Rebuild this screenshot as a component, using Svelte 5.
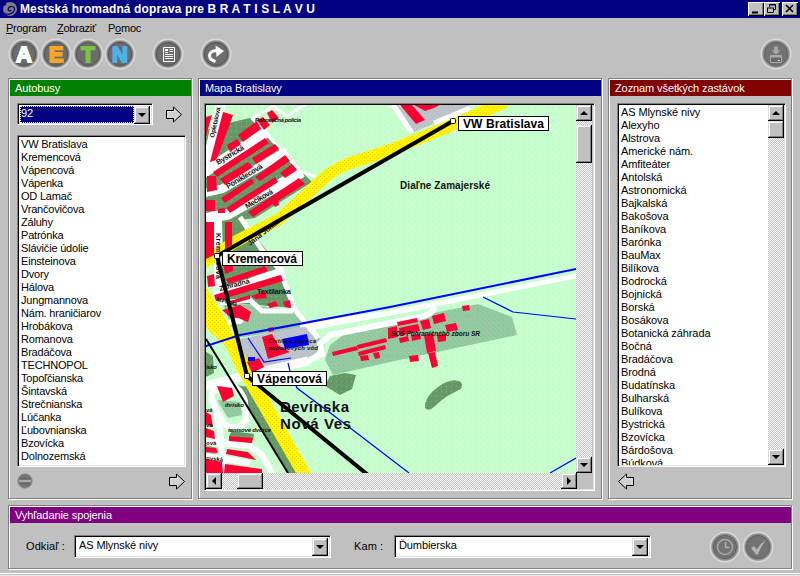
<script>
  const stops = ['VW Bratislava', 'Kremencová', 'Vápencová', 'Vápenka', 'OD Lamač', 'Vrančovičova', 'Záluhy', 'Patrónka', 'Slávičie údolie', 'Einsteinova', 'Dvory', 'Hálova', 'Jungmannova', 'Nám. hraničiarov', 'Hrobákova', 'Romanova', 'Bradáčova', 'TECHNOPOL', 'Topoľčianska', 'Šintavská', 'Strečnianska', 'Lúčanka', 'Ľubovnianska', 'Bzovícka', 'Dolnozemská'];
  const all = ['AS Mlynské nivy', 'Alexyho', 'Alstrova', 'Americké nám.', 'Amfiteáter', 'Antolská', 'Astronomická', 'Bajkalská', 'Bakošova', 'Baníkova', 'Barónka', 'BauMax', 'Bilíkova', 'Bodrocká', 'Bojnická', 'Borská', 'Bosákova', 'Botanická záhrada', 'Bočná', 'Bradáčova', 'Brodná', 'Budatínska', 'Bulharská', 'Bulíkova', 'Bystrická', 'Bzovícka', 'Bárdošova', 'Búdková'];
  const letters = [['A', '#ffffff'], ['E', '#f5a623'], ['T', '#7cc142'], ['N', '#4bb4e6']];
  const reds = [
    '223,112 233,115 220,151 216,160 210,162', '206,117 212,115 206,136',
    '238,135 257,121 261,129 243,142', '257,120 263,117 270,125 264,130', '267,113 272,110 279,118 272,123', '227,145 237,139 241,144 230,152',
    '213,172 265,138 269,143 217,177', '220,179 248,162 253,167 225,185', '252,158 275,144 279,149 256,164',
    '221,198 252,178 254,183 225,203', '255,177 285,155 290,161 260,181', '226,208 275,177 278,182 230,213', '280,173 292,164 297,170 285,178',
    '248,212 299,178 305,184 278,201 279,205 275,207 273,204 253,217',
    '207,176 216,176 217,190 207,192', '206,200 215,200 215,211 206,211', '218,209 225,208 225,213 218,213',
    '225,222 232,222 232,245 225,249', '206,222 214,222 214,255 206,259', '223,261 233,260 233,271 225,274', '207,276 214,274 215,286 208,287',
    '226,279 265,266 268,271 229,284', '214,295 281,275 283,281 216,301', '230,301 250,295 250,299 231,304', '251,296 265,291 267,298 256,299', '267,304 276,301 278,306 270,308', '283,302 290,300 291,308 285,307',
    '222,310 240,305 251,312 248,322 238,318 230,317', '268,328 273,327 274,331 269,332',
    '247,362 259,358 264,367 252,373', '262,337 272,334 278,345 290,352 268,359',
    '397,322 417,318 418,322 398,326', '332,352 357,346 358,350 333,356', '357,345 386,338 387,342 358,349', '358,352 385,345 386,349 359,356',
    '388,328 397,326 398,337 388,339', '399,328 418,324 420,331 400,336', '399,338 408,336 409,341 400,343', '411,335 420,334 421,339 412,341', '420,321 429,319 431,328 423,330', '432,316 444,313 446,321 434,324', '445,325 456,323 458,330 447,332', '437,335 446,334 446,341 438,342', '424,335 433,333 436,351 427,353', '428,353 435,352 438,366 432,368', '409,356 418,355 419,361 410,362', '462,306 469,305 470,310 463,311', '360,356 368,355 369,360 361,361', '373,353 379,352 380,358 375,359',
    '400,105 412,105 425,120 416,124', '414,105 440,105 434,108 425,111',
    '217,386 232,388 234,396 223,402', '206,412 211,415 213,427 206,424', '206,428 214,431 215,439 206,437', '206,447 216,448 218,453 206,452',
    '229,436 253,438 252,443 229,441', '227,449 248,452 256,460 226,454', '206,459 222,462 223,473 206,473', '225,464 262,469 262,473 224,473'
  ];
</script>

{#snippet arrow(flip)}
  <svg class="arrow" width="17" height="17" viewBox="0 0 17 17" class:flip>
    <path d="M1 4.5H7.5V1L15.5 8.5L7.500 16V12.500H1Z" fill="#d0d0d0" />
    <path d="M2 11.500V5.500H8.500V3" fill="none" stroke="#fff" stroke-dasharray="1 1" />
    <path d="M7.500 4.500V1L15.500 8.500L7.500 16V12.500H.5V4.500H7.500" fill="none" stroke="#000" />
  </svg>
{/snippet}

{#snippet orb(kind, color, dim)}
  <svg width="32" height="32" viewBox="0 0 32 32">
    <circle cx="16" cy="16" r="16" fill="url(#rim)" />
    <circle cx="16" cy="16" r="12.500" fill={dim ? '#737373' : '#6c6c6c'} stroke={dim ? '#8c8c8c' : '#848484'} stroke-width="1.500" />
    <circle cx="16" cy="16" r="11.500" fill="none" stroke={dim ? '#606060' : '#505050'} />
    {#if kind.length === 1}
      <text x="16" y="24" text-anchor="middle" class="letter" fill={color} stroke={color}>{kind}</text>
    {:else if kind === 'doc'}
      <path d="M11.500 9.500H22.500V23.500H11.500Z" fill="none" stroke="#fff" />
      <path d="M13 11.500H16M13 12.500H16M13 14.500H16M17.500 11.500H21M17.500 13.500H21M13 16.500H21M13 18.500H21M13 20.500H21" stroke="#fff" />
    {:else if kind === 'redo'}
      <path d="M15.500 23.500C6.500 21 8 12.500 17.500 12.500" fill="none" stroke="#fff" stroke-width="3" /><path d="M15.500 7.500L24 13L16.500 19Z" fill="#fff" />
    {:else if kind === 'save'}
      <path d="M14 8.500H18V12.500H20.500L16 16.500L11.500 12.500H14Z" fill="#a8a8a8" /><path d="M10.500 17.500H21.500V24.500H10.500Z" fill="#686868" stroke="#a8a8a8" /><path d="M10.500 18.500H21.500" stroke="#a8a8a8" stroke-width="2" /><path d="M17.500 22.500H20" stroke="#ccc" />
    {:else if kind === 'clock'}
      <circle cx="16" cy="16" r="7.500" fill="none" stroke="#a8a8a8" stroke-width="1.500" /><path d="M16.500 11V16.500H20.500" fill="none" stroke="#b0b0b0" stroke-width="1.500" />
    {:else}
      <path d="M9 17L12 15L15 18.500Q17.500 13 24 9Q19 15 16 23.500H14Z" fill="#b4b4b4" />
    {/if}
  </svg>
{/snippet}

{#snippet btn(dir)}
  <span class="btn"><i class={dir}></i></span>
{/snippet}

<div class="app">
  <svg width="0" height="0" class="defs"><defs>
    <radialGradient id="rim"><stop offset=".8" stop-color="#8c8c8c" /><stop offset=".86" stop-color="#b8b8b8" /><stop offset=".92" stop-color="#dedede" /><stop offset="1" stop-color="#c0c0c0" /></radialGradient>
  </defs></svg>
  <header>
    <svg class="logo" width="16" height="16" viewBox="0 0 16 16"><circle cx="8" cy="8" r="7" fill="#808080" /><path d="M2 12Q7 15 11.500 11Q14 7 10.500 5.500Q6.500 5 6 8.500Q7 11 9.500 9" fill="none" stroke="#000080" stroke-width="1.200" /><path d="M1 4L4 3M12 14L15 13" stroke="#000080" stroke-width="2" /></svg>
    <b>Mestská hromadná doprava pre B R A T I S L A V U</b>
    <div class="winbtns">
      <span><svg width="16" height="14"><path d="M4 10.500H10" stroke="#000" stroke-width="2" /></svg></span>
      <span><svg width="16" height="14"><path d="M5.500 5V2.500H11.500V7.500H9.500M5 3H12M3 6H10M3.500 6V10.500H9.500V6" fill="none" stroke="#000" /></svg></span>
      <span class="close"><svg width="16" height="14"><path d="M4 3L11 10M11 3L4 10" stroke="#000" stroke-width="1.700" /></svg></span>
    </div>
  </header>
  <nav><span><u>P</u>rogram</span><span><u>Z</u>obraziť</span><span>P<u>o</u>moc</span></nav>
  <div class="toolbar">
    {#each letters as [l, c]}{@render orb(l, c, false)}{/each}
    <div class="t-doc">{@render orb('doc', '', false)}</div>
    <div class="t-redo">{@render orb('redo', '', false)}</div>
    <div class="t-save">{@render orb('save', '', true)}</div>
  </div>
  <main>
    <section class="panel left">
      <h2 class="green">Autobusy</h2>
      <div class="pick"><div class="combo small"><span class="sel">92</span>{@render btn('down')}</div>{@render arrow(false)}</div>
      <ul class="sunk list">{#each stops as s}<li>{s}</li>{/each}</ul>
      <div class="foot">
        <svg width="16" height="16" viewBox="0 0 16 16"><circle cx="8" cy="8" r="7.300" fill="#747474" stroke="#999" /><path d="M2.500 6H13.500M2.500 10H13.500" stroke="#555" /><path d="M2 8H14" stroke="#a8a8a8" stroke-width="2.500" /></svg>
        {@render arrow(false)}
      </div>
    </section>
    <section class="panel mid">
      <h2 class="navy">Mapa Bratislavy</h2>
      <div class="sunk mapbox">
        <div class="maprow">
          <svg class="map" width="370" height="368" viewBox="206 105 370 368">
            <defs>
              <pattern id="land" width="6" height="6" patternUnits="userSpaceOnUse"><rect width="6" height="6" fill="#c8fecc" /><path d="M0 0h1v1h-1zM3 2h1v1h-1zM1 4h1v1h-1z" fill="#aaffcc" /><path d="M4 0h1v1h-1zM5 4h1v1h-1z" fill="#ccffea" /></pattern>
              <pattern id="wood" width="5" height="5" patternUnits="userSpaceOnUse"><rect width="5" height="5" fill="#669966" /><path d="M1 1h1v1h-1z" fill="#85b385" /><path d="M3 3h1v1h-1z" fill="#4f9966" /></pattern>
              <pattern id="park" width="5" height="5" patternUnits="userSpaceOnUse"><rect width="5" height="5" fill="#94cba0" /><path d="M0 1h1v1h-1zM2 3h1v1h-1z" fill="#7cc29a" /><path d="M3 0h1v1h-1z" fill="#98ae98" /></pattern>
              <pattern id="plant" width="4" height="4" patternUnits="userSpaceOnUse"><rect width="4" height="4" fill="#c0c4cc" /><path d="M0 1h1v1h-1zM2 3h1v1h-1z" fill="#a8b8c0" /></pattern>
              <pattern id="road" width="4" height="4" patternUnits="userSpaceOnUse"><rect width="4" height="4" fill="#fff800" /><path d="M0 0h1v1h-1zM2 2h1v1h-1z" fill="#ffcc00" /></pattern>
            </defs>
            <rect x="206" y="105" width="370" height="368" fill="url(#land)" />
            <g fill="url(#wood)">
              <path d="M206 130L228 123L250 118L302 172L312 182L255 218L206 225Z M222 216L243 220L280 268L293 308L220 302L223 255Z" />
              <path d="M235 385L250 387L297 473L288 473Z M206 352L213 356L214 373L206 377Z M232 431L254 434L253 439L229 436Z" />
              <path d="M325 386L330 376L345 373L356 375L352 389L340 395Z M425 408Q424 397 438 387Q452 377 461 382Q465 388 455 392Q444 397 434 407Q428 412 425 408Z" />
            </g>
            <path d="M222 302L295 310L308 327L236 338Z M478 304L512 317L517 335L390 362L333 375L325 360L330 345L350 330Z M217 400L240 402L242 415L228 418Z M206 445L218 448L216 455L206 454Z" fill="url(#park)" />
            <path d="M236 340L308 325L325 345L310 358L255 368L242 375Z M397 105L414 132L450 117L470 105Z" fill="url(#plant)" />
            <g fill="none" stroke="#fff">
              <path d="M221 103L207 164" stroke-width="10" />
              <path d="M203 173L268 131M204 219L228 214L302 172" stroke-width="11" />
              <path d="M204 193L222 189L287 151" stroke-width="8.500" />
              <path d="M252 118L300 171L316 177M252 118L273 106L287 116L306 104" stroke-width="3" />
              <path d="M218 215V288" stroke-width="8" />
              <path d="M214 294L284 270" stroke-width="7" />
              <path d="M240 217L262 250L280 270L295 310L318 338" stroke-width="5" />
              <path d="M220 303L250 300L262 311L293 311M222 323L243 320M239 311V324M300 325L325 322L390 313L576 276" stroke-width="5" />
              <path d="M308 329L333 324L430 306" stroke-width="4" />
              <path d="M206 386L243 376L308 361L322 354L320 344L330 335L420 317Q432 315 435 307" stroke-width="6" />
              <path d="M206 386L243 376L308 361" stroke-width="9" />
              <path d="M232 387L213 391Q209 397 215 408L224 423Q229 430 240 426L246 420L245 401Q240 387 232 387M213 400L220 430L224 473M206 442L250 446L262 455L272 473M206 456L250 463M211 435L225 442" stroke-width="6" />
              <path d="M393 105L412 133M434 123L470 108" stroke-width="5" />
              <path d="M398 98L402 106" stroke-width="4" />
            </g>
            <g fill="none" stroke="url(#road)" stroke-width="12">
              <path d="M204 263L233 243L279 219Q300 201 323 179Q334 169 350 163L390 150L455 124L505 102" />
              <path d="M206 287L214 300L225 318L233 334L257 377L311 473H296L236 369L226 347L206 328Z" fill="url(#road)" stroke="none" />
            </g>
            <g fill="#ff0033">{#each reds as p}<polygon points={p} />{/each}</g>
            <g fill="none" stroke="#0000ff">
              <path d="M206 346L240 335L390 307L576 269" stroke-width="2" />
              <path d="M248 338L264 362L291 358M288 363L290 371L297 388L345 424L409 473M483 297L513 312L576 319M550 473L576 458" stroke-width="1.200" />
              <path d="M282 339L307 334L309 345L285 349ZM248 357H255V361H248Z" fill="#0000ff" stroke="none" />
            </g>
            <path d="M206 339L214 352L288 473" fill="none" stroke="#000" stroke-width="2" />
            <g class="labels">
              <text x="400" y="189" font-size="10" textLength="90">Diaľne Zamajerské</text>
              <text x="280" y="412" font-size="15" textLength="69">Devínska</text>
              <text x="280" y="429" font-size="15" textLength="71">Nová Ves</text>
              <text transform="translate(214 138) rotate(-78)" font-size="6.500" textLength="31">Opletalova</text>
              <text transform="translate(218 165) rotate(-31)" font-size="7.500" textLength="31">Bystrická</text>
              <text transform="translate(228 189) rotate(-31)" font-size="7.500" textLength="41">Poniklecová</text>
              <text transform="translate(247 209) rotate(-31)" font-size="7.500" textLength="31">Mečíková</text>
              <text transform="translate(216 233) rotate(90)" font-size="7" textLength="46">Kremencová</text>
              <text transform="translate(250 246) rotate(-38)" font-size="7" textLength="42">Jána Jonáša</text>
              <text transform="translate(220 291) rotate(-15)" font-size="7" textLength="31">Záhradná</text>
              <text transform="translate(216 301) rotate(14)" font-size="6" textLength="21">M.Pišúta</text>
              <text x="257" y="294" font-size="7.500" textLength="34">Textilanka</text>
              <text x="206" y="412" font-size="6">vá</text><text x="206" y="427" font-size="6">va</text><text x="206" y="445" font-size="6">ová</text><text x="206" y="460" font-size="6" transform="rotate(6 206 460)">ovská</text>
              <g font-style="italic" font-size="6">
                <text x="255" y="122" textLength="46">Pohraničná polícia</text>
                <text x="268" y="343" textLength="48">Čistiaca stanica</text><text x="268" y="350" textLength="50">odpadových vôd</text>
                <text x="391" y="336" font-size="6.500" textLength="89">SOŠ Pohraničného zboru SR</text>
                <text x="206" y="369" textLength="11">isko</text><text x="225" y="407" textLength="19">ihrisko</text><text x="228" y="432" textLength="43">tenisové dvorce</text>
              </g>
            </g>
            <path d="M453 121L217 256L247 376L368 475" fill="none" stroke="#000" stroke-width="4" />
            <g fill="#fff" stroke="#000"><rect x="450.500" y="118.500" width="5" height="5" rx="1" /><rect x="214.500" y="253.500" width="5" height="5" rx="1" /><rect x="244.500" y="373.500" width="5" height="5" rx="1" />
              <rect x="458.500" y="116.500" width="90" height="14" /><rect x="222.500" y="251.500" width="80" height="14" /><rect x="252.500" y="371.500" width="74" height="14" /></g>
            <g class="stoplabels"><text x="463" y="128" textLength="81">VW Bratislava</text><text x="227" y="263" textLength="70">Kremencová</text><text x="257" y="383" textLength="65">Vápencová</text></g>
          </svg>
          <div class="vsb">{@render btn('up')}<b class="thumb"></b><span class="fill"></span>{@render btn('down')}</div>
        </div>
        <div class="hsb">{@render btn('lt')}<b class="thumb"></b><span class="fill"></span>{@render btn('rt')}<em></em></div>
      </div>
    </section>
    <section class="panel right">
      <h2 class="maroon">Zoznam všetkých zastávok</h2>
      <div class="sunk listbox"><ul>{#each all as s}<li>{s}</li>{/each}</ul>
        <div class="vsb">{@render btn('up')}<b class="thumb"></b><span class="fill"></span>{@render btn('down')}</div></div>
      <div class="foot">{@render arrow(true)}</div>
    </section>
  </main>
  <section class="panel bottom">
    <h2 class="purple">Vyhľadanie spojenia</h2>
    <div class="search">
      <label for="from">Odkiaľ :</label><div id="from" class="combo wide"><span>AS Mlynské nivy</span>{@render btn('down')}</div>
      <label for="to" class="kam">Kam :</label><div id="to" class="combo wide"><span>Ďumbierska</span>{@render btn('down')}</div>
      <div class="go">{@render orb('clock', '', true)}{@render orb('check', '', true)}</div>
    </div>
  </section>
  <div class="status"></div>
</div>

<style>
  .app { width: 800px; height: 576px; background: #c0c0c0; overflow: hidden; font: 11px/13px "Liberation Sans", Arial, sans-serif; letter-spacing: -.1px; color: #000; display: flex; flex-direction: column; }
  .app :global(*) { box-sizing: border-box; }
  svg { display: block; flex: none; letter-spacing: 0; }
  .defs { height: 0; }
  header { height: 18px; flex: none; background: #000080; color: #fff; display: flex; align-items: center; padding: 0 2px; }
  header b { margin-left: 2px; font-size: 12px; letter-spacing: .12px; white-space: pre; }
  .winbtns { margin-left: auto; display: flex; }
  .winbtns span { width: 16px; height: 14px; background: #c0c0c0; box-shadow: inset 1px 1px #fff, inset -1px -1px #000, inset -2px -2px #808080; }
  .winbtns .close { margin-left: 2px; }
  nav { height: 20px; flex: none; display: flex; padding: 4px 6px 0; }
  nav span { width: 51px; white-space: nowrap; letter-spacing: -.25px; }
  .toolbar { height: 40px; flex: none; display: flex; padding-left: 8px; }
  .t-doc { margin-left: 16px; } .t-redo { margin-left: 16px; } .t-save { margin-left: auto; padding-right: 8px; }
  .letter { font: bold 22px "Liberation Sans", Arial, sans-serif; stroke-width: 1.8px; }
  main { display: flex; padding-left: 8px; height: 421px; flex: none; }
  .panel { border: 1px solid #808080; box-shadow: inset 1px 1px #fff, 1px 1px #fff; padding: 1px 0 0 1px; height: 421px; flex: none; }
  .left { width: 184px; } .mid { width: 404px; margin-left: 6px; } .right { width: 184px; margin-left: 6px; }
  h2 { margin: 0; height: 16px; font-size: 11px; line-height: 16px; font-weight: normal; color: #fff; padding-left: 5px; }
  .green { background: #008000; } .navy { background: #000080; } .maroon { background: #800000; } .purple { background: #800080; }
  .sunk, .combo { border: 1px solid; border-color: #808080 #fff #fff #808080; background: #fff; box-shadow: inset 1px 1px #000, inset -1px -1px #dfdfdf; padding: 2px; }
  .combo { display: flex; height: 23px; padding: 1px 2px 2px 2px; }
  .combo > span:first-child { flex: 1; line-height: 15px; padding-left: 1px; margin: 1px 1px 0; }
  .small { width: 136px; height: 22px; }
  .small .sel { background: #000080; color: #fff; outline: 1px dotted #ffff80; outline-offset: -1px; height: 17px; margin: 1px 0 0 !important; padding-left: 1px !important; }
  .pick { display: flex; padding: 7px 0 0 7px; gap: 13px; align-items: center; height: 29px; }
  .flip { transform: scaleX(-1); }
  ul { list-style: none; margin: 0; padding: 0; overflow: hidden; }
  li { height: 13px; white-space: nowrap; padding-left: 2px; }
  .list { width: 169px; height: 332px; margin: 10px 0 0 7px; letter-spacing: -.2px; }
  .list li { padding-left: 1px; }
  .left .list { padding-top: 2px; }
  .left .foot { display: flex; justify-content: space-between; padding: 6px 5px 0 7px; }
  .mapbox { width: 391px; height: 388px; margin: 7px 0 0 4px; padding: 1px; background: #c0c0c0; }
  .maprow { display: flex; height: 368px; }
  .vsb { width: 16px; display: flex; flex-direction: column; }
  .hsb { height: 16px; display: flex; }
  .vsb, .hsb { background: repeating-conic-gradient(#fff 0 25%, #c0c0c0 0 50%) 0 0 / 2px 2px; }
  .hsb em { width: 16px; background: #c0c0c0; }
  .fill { flex: 1; }
  .btn, .thumb { width: 16px; height: 16px; flex: none; background: #c0c0c0; box-shadow: inset -1px -1px #000, inset 1px 1px #dfdfdf, inset -2px -2px #808080, inset 2px 2px #fff; display: flex; align-items: center; justify-content: center; }
  .mid .vsb .thumb { margin-top: 4px; height: 38px; } .hsb .thumb { width: 26px; margin-left: 15px; }
  .right .thumb { height: 17px; }
  .combo .btn { height: 18px; margin-top: 1px; }
  .btn i { border: 4px solid transparent; }
  .btn .down { border-bottom: 0; border-top-color: #000; } .btn .up { border-top: 0; border-bottom-color: #000; }
  .btn .lt { border-left: 0; border-right-color: #000; } .btn .rt { border-right: 0; border-left-color: #000; }
  .labels, .stoplabels { font-family: "Liberation Sans", Arial, sans-serif; font-weight: bold; fill: #111; }
  .stoplabels { font-size: 12px; fill: #000; }
  .listbox { display: flex; width: 169px; height: 364px; margin: 7px 0 0 7px; padding: 1px; }
  .listbox ul { flex: 1; padding-top: 1px; }
  .right .foot { padding: 6px 0 0 7px; }
  .bottom { width: 784px; height: 64px; margin: 6px 0 0 8px; }
  .search { display: flex; padding: 12px 0 0 16px; }
  .search label { width: 48px; padding-top: 5px; letter-spacing: .1px; }
  .search .kam { margin-left: 23px; width: 40px; }
  .wide { width: 257px; }
  .go { display: flex; margin: -4px 0 0 58px; gap: 1px; }
  .status { margin-top: 4px; height: 3px; flex: none; border-top: 1px solid #fff; border-bottom: 1px solid #e8e8e8; }
</style>
